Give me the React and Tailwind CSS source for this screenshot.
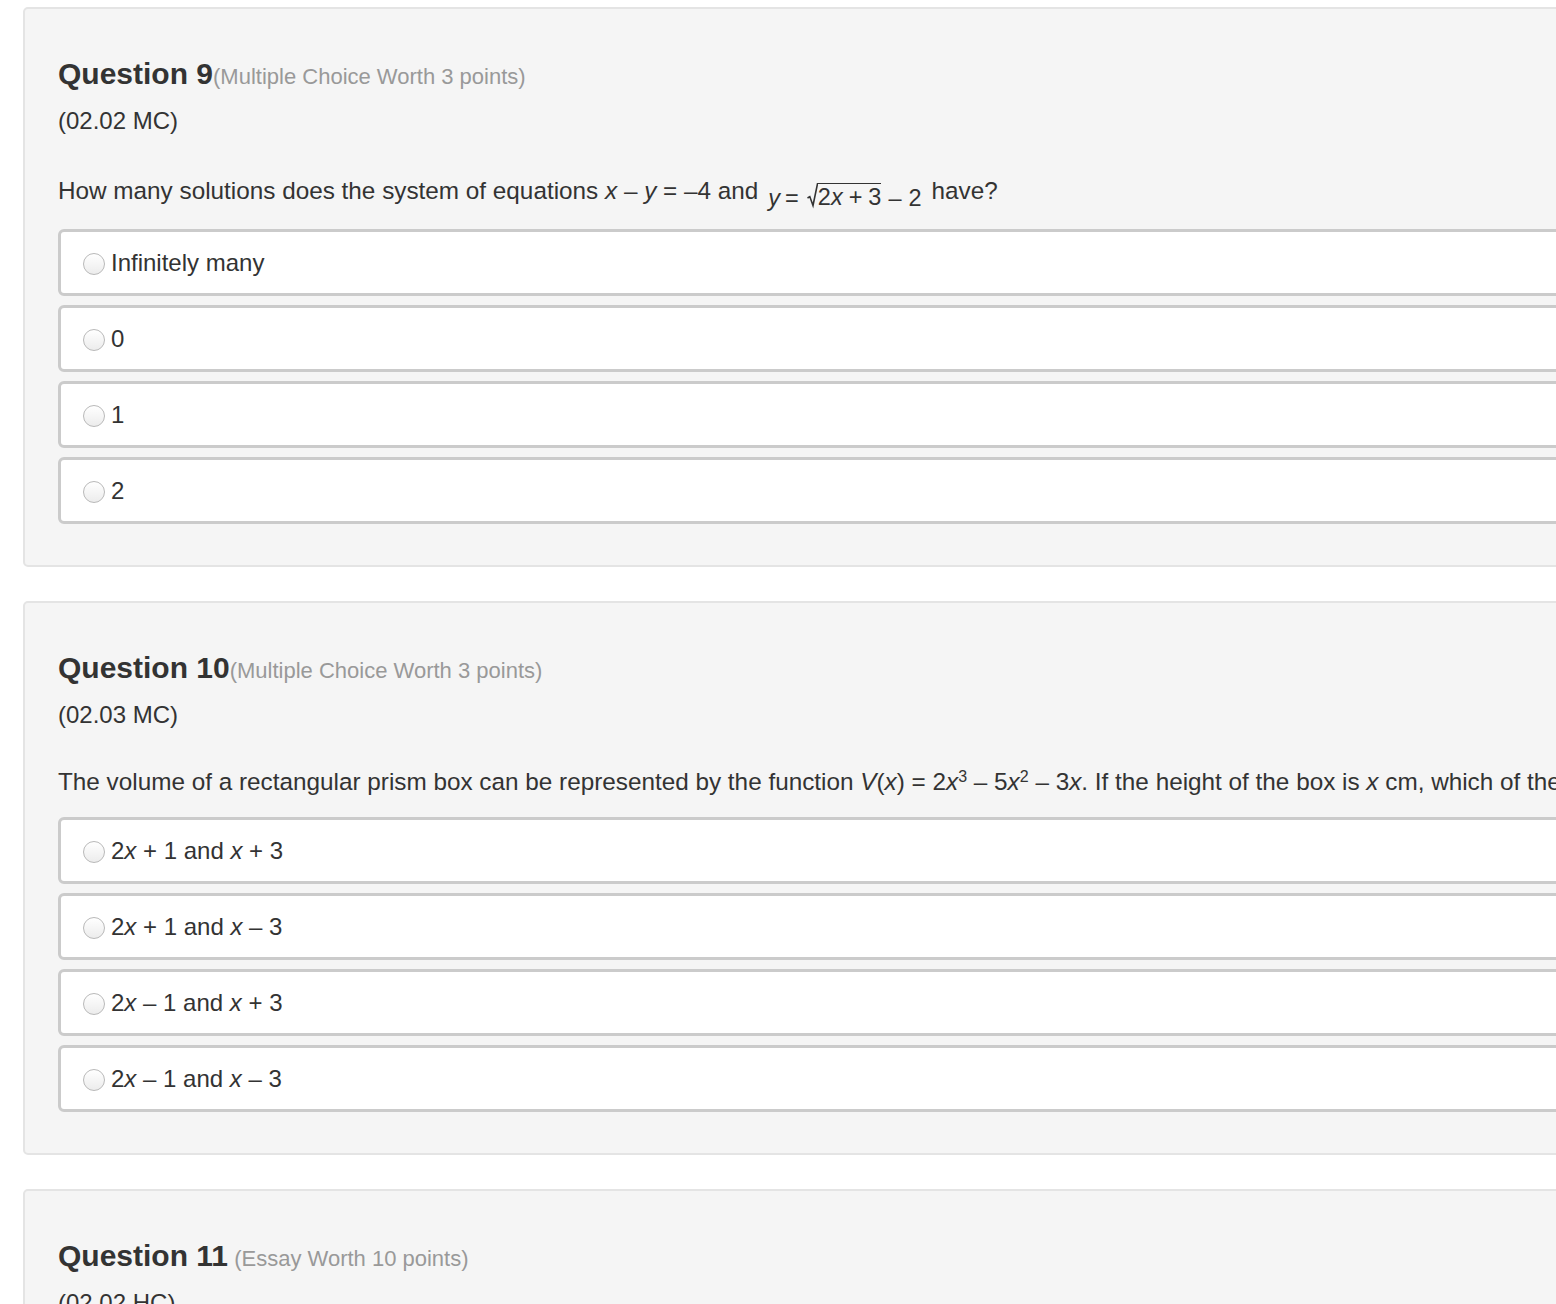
import React from "react";

const FONT = { fontFamily: '"Liberation Sans", Arial, Helvetica, sans-serif' };

function Radio() {
  return (
    <span className="inline-block w-[22px] h-[22px] rounded-full border border-[#b9b9b9] bg-gradient-to-b from-[#ffffff] to-[#ececec] shrink-0 mt-[3px]" />
  );
}

function Option({ children }) {
  return (
    <div className="h-[67px] border-[3px] border-[#cbcbcb] rounded-[6px] bg-white flex items-center pl-[22px] gap-[6px] text-[24px] text-[#333]">
      <Radio />
      <span className="leading-none">{children}</span>
    </div>
  );
}

function Panel({ num, kind, spaced, code, question, options, tall }) {
  return (
    <div className="ml-[23px] w-[1700px] bg-[#f5f5f5] border-2 border-[#e4e4e4] rounded-[5px] pt-[48px] pl-[33px] pb-[41px]">
      <div className="h-[33px] leading-[33px] text-[#333]">
        <span className="text-[30px] font-bold">Question {num}</span>
        <span className="text-[22px] text-[#999]">
          {spaced ? " " : ""}({kind})
        </span>
      </div>
      <div className="mt-[14px] h-[33px] leading-[33px] text-[24px] text-[#333]">{code}</div>
      {question && (
        <div
          className={`${tall ? "mt-[37px]" : "mt-[34px]"} h-[33px] leading-[33px] text-[24.3px] text-[#333] whitespace-nowrap`}
        >
          {question}
        </div>
      )}
      {options && (
        <div className={`${tall ? "mt-[22px]" : "mt-[19px]"} flex flex-col gap-[9px]`}>
          {options.map((o, i) => (
            <Option key={i}>{o}</Option>
          ))}
        </div>
      )}
    </div>
  );
}

function SqrtEq() {
  return (
    <span className="inline-flex items-end align-[-7px] h-[26px] leading-[22px] text-[23.5px] mx-[10px]">
      <i>y</i>
      <span className="ml-[5px] mr-[8px]">=</span>
      <svg width="11" height="26" viewBox="0 0 11 26" className="shrink-0">
        <path d="M0.5 15 L2.8 13.6 L6 22.5 L10.5 0.8 L11 0.8" fill="none" stroke="#333" strokeWidth="1.6" />
      </svg>
      <span className="border-t-[1.6px] border-[#333] pt-[2px] h-[26px] leading-[22px]">
        2<i>x</i>
        <span className="mx-[6px]">+</span>3
      </span>
      <span className="ml-[7px]">–</span>
      <span className="ml-[7px]">2</span>
    </span>
  );
}

export default function App() {
  const q9Options = ["Infinitely many", "0", "1", "2"];

  const q10Options = [
    <>2<i>x</i> + 1 and <i>x</i> + 3</>,
    <>2<i>x</i> + 1 and <i>x</i> – 3</>,
    <>2<i>x</i> – 1 and <i>x</i> + 3</>,
    <>2<i>x</i> – 1 and <i>x</i> – 3</>,
  ];

  return (
    <div className="w-[1556px] h-[1304px] overflow-hidden bg-white pt-[7px]" style={FONT}>
      <Panel
        num="9"
        kind="Multiple Choice Worth 3 points"
        code="(02.02 MC)"
        tall
        question={
          <>
            How many solutions does the system of equations <i>x</i> – <i>y</i> = –4 and
            <SqrtEq />
            have?
          </>
        }
        options={q9Options}
      />

      <div className="h-[34px]" />

      <Panel
        num="10"
        kind="Multiple Choice Worth 3 points"
        code="(02.03 MC)"
        question={
          <>
            The volume of a rectangular prism box can be represented by the function <i>V</i>(<i>x</i>) = 2<i>x</i>
            <sup className="text-[16px]">3</sup> – 5<i>x</i>
            <sup className="text-[16px]">2</sup> – 3<i>x</i>. If the height of the box is <i>x</i> cm, which of the following could represent the other two dimensions of the box?
          </>
        }
        options={q10Options}
      />

      <div className="h-[34px]" />

      <Panel
        num="11"
        kind="Essay Worth 10 points"
        spaced
        code="(02.02 HC)"
        question="Explain your answer."
      />
    </div>
  );
}
